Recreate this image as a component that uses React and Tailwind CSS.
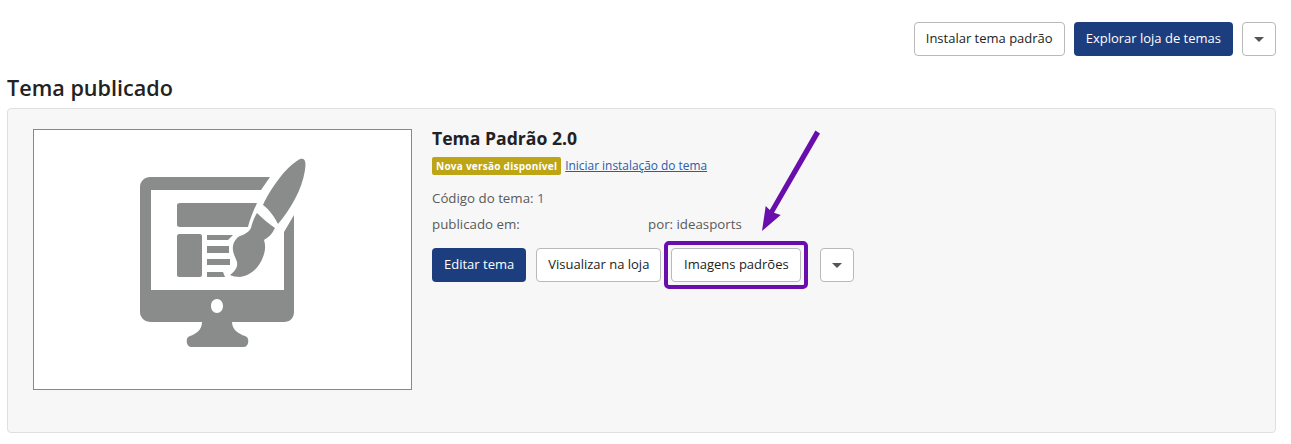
const outlineBtn = "h-[34px] px-[11px] rounded-[4px] border border-[#b9b9b9] bg-white text-[13px] text-[#222] flex items-center";

const Caret = () => (
  <button className="h-[34px] w-[34px] rounded-[4px] border border-[#b9b9b9] bg-white flex items-center justify-center">
    <span className="w-0 h-0 border-x-[5px] border-x-transparent border-t-[5px] border-t-[#555]" />
  </button>
);

const ThemeIcon = () => (
  <svg width="200" height="220" viewBox="0 0 200 220" fill="#8a8c8b">
    <path
      fillRule="evenodd"
      d="M30 37H150L141 50H31V150H164V92L174 75V172C174 178 170 182 164 182H112C112 190 119 194 125 196C130 197 129 207 124 207H71C66 207 65 197 70 196C76 194 82 190 82 182H31C25 182 20 178 20 172V47C20 41 25 37 30 37ZM97 159C93.5 159 91 162 91 166C91 170 93.5 173 97 173C100.5 173 103 170 103 166C103 162 100.5 159 97 159Z"
    />
    <path d="M60 63H137C134 70 131 76 128 87H60C58 87 57 86 57 85V65C57 64 58 63 60 63Z" />
    <path d="M59 94H80C81 94 82 95 82 96V135C82 136 81 137 80 137H59C58 137 57 136 57 135V96C57 95 58 94 59 94Z" />
    <path d="M87 95H113L108 100H87ZM87 106H109V113H87ZM87 119H110V125H87ZM87 132H103L105 137H87Z" />
    <path d="M180 19C186 17 186 24 185 30C182 50 170 70 158 84C155 78 150 70 143 65C150 50 165 27 180 19Z" />
    <path d="M137 73C143 79 149 84 155 88C152 94 149 97 144 100C146 106 145 112 143 117C139 128 130 136 120 137C116 137 112 136 110 135C115 131 118 127 117 122C115 116 112 112 113 106C114 100 118 96 123 95C126 93 129 92 131 88C132 83 134 78 137 73Z" />
  </svg>
);

const App = () => {
  return (
    <div className="relative w-[1291px] h-[444px] bg-white pt-[22px] pl-[7px] pr-[15px] font-['Open_Sans',sans-serif] text-[#222] overflow-hidden">
      <div className="flex justify-end gap-[9px]">
        <button className={outlineBtn}>Instalar tema padrão</button>
        <button className="h-[34px] px-3 rounded-[4px] bg-[#1c3d7e] text-white text-[13px] font-medium flex items-center">
          Explorar loja de temas
        </button>
        <Caret />
      </div>

      <h2 className="mt-[17px] text-[21.6px] leading-[30px] font-semibold text-[#222]">Tema publicado</h2>

      <div className="mt-[5px] h-[325px] rounded-[4px] border border-[#dfdfdf] bg-[#f7f7f7] pt-5 pl-[25px] flex gap-5">
        <div className="w-[379px] h-[261px] border border-[#888] bg-white shrink-0">
          <div className="ml-[86px] mt-[10px]">
            <ThemeIcon />
          </div>
        </div>

        <div className="flex flex-col items-start">
          <h3 className="text-[17.6px] leading-[18px] font-bold text-[#222]">Tema Padrão 2.0</h3>
          <div className="mt-[10px] flex items-center gap-1">
            <span className="h-[18px] px-1 rounded-[2px] bg-[#bda516] text-white text-[10px] font-bold tracking-[0.25px] flex items-center">
              Nova versão disponível
            </span>
            <a className="text-[11.9px] text-[#2a5caa] underline">Iniciar instalação do tema</a>
          </div>
          <p className="mt-[14px] text-[13.3px] leading-[18px] text-[#5a5a5a]">
            Código do tema: <span className="text-[#4a6a8a]">1</span>
          </p>
          <div className="mt-2 flex text-[13.3px] leading-[18px] text-[#5a5a5a]">
            <span className="w-[216px]">publicado em:</span>
            <span>por: ideasports</span>
          </div>
          <div className="mt-[15px] flex items-center">
            <button className="h-[34px] px-3 rounded-[4px] bg-[#1c3d7e] text-white text-[13px] font-medium flex items-center">
              Editar tema
            </button>
            <button className={`${outlineBtn} ml-[10px]`}>Visualizar na loja</button>
            <div className="relative ml-[10px]">
              <button className="h-[34px] w-[130px] rounded-[4px] border border-[#b9b9b9] bg-white text-[13px] text-[#222] flex items-center justify-center">
                Imagens padrões
              </button>
              <span className="absolute -inset-[7px] rounded-[5px] border-[4px] border-[#6a0dad]" />
            </div>
            <div className="ml-[19px]">
              <Caret />
            </div>
          </div>
        </div>
      </div>

      <svg className="absolute left-[755px] top-[125px]" width="70" height="112" viewBox="0 0 70 112" fill="#6a0dad">
        <path d="M60.4 5.5L65 8.5L19 87.7L25.7 90L7 106L10.7 81L14.8 85Z" />
      </svg>
    </div>
  );
};

export default App;
